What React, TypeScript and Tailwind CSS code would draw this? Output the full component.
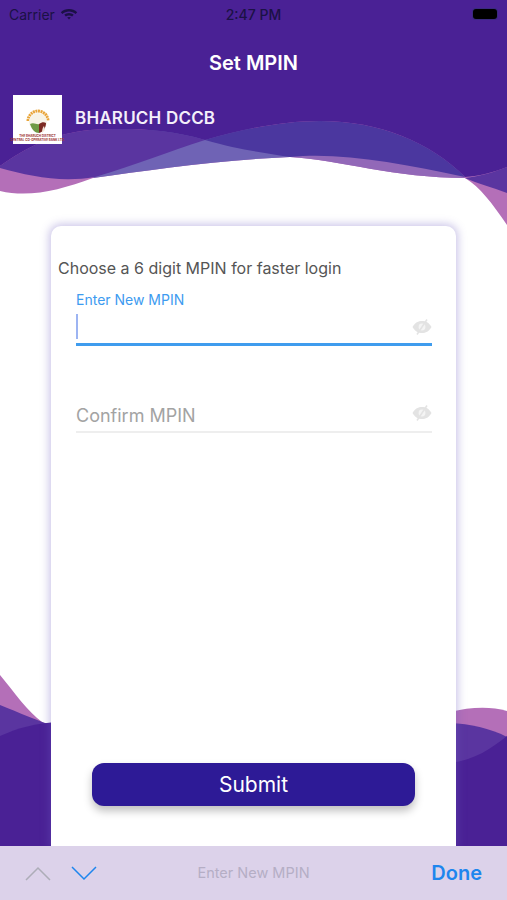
import React from 'react'

const FONT = "font-['Inter','Liberation_Sans',sans-serif]"

// header and footer swooshes behind the card
const Waves = () => (
  <svg className="absolute inset-0 h-[900px] w-[507px]" viewBox="0 0 507 900" fill="none">
    {/* top */}
    <path d="M0 0H507V225C492 203 480 187 465 178C395 178 340 160 290 157C220 160 150 170 93 178C60 190 30 198 0 191Z" fill="#b46fb8" />
    <path d="M93 178C150 170 220 160 290 157L240 120L150 130Z" fill="#6f63b5" />
    <path d="M290 157C340 160 395 178 465 178L440 140L300 130Z" fill="#9268b8" />
    <path d="M0 168C30 176 60 183 95 177C135 165 170 151 205 140C165 128 125 128 90 130C55 133 25 148 0 166Z" fill="#5a35a0" />
    <path d="M205 140C240 150 265 153 290 157C340 152 400 163 465 177C430 142 380 121 320 121C280 121 240 130 205 140Z" fill="#4b379f" />
    <path d="M465 178C480 176 495 172 507 167V193C492 187 478 184 465 178Z" fill="#5a35a0" />
    <path d="M0 0H507V167C495 172 480 176 465 177C430 142 380 121 320 121C280 121 240 130 205 140C165 128 125 128 90 130C55 133 25 148 0 166Z" fill="#4a2195" />
    {/* bottom left */}
    <path d="M0 675C14 692 28 712 42 722L60 730L0 740Z" fill="#b46fb8" />
    <path d="M0 705C20 713 35 720 60 728V760H0Z" fill="#5a35a0" />
    <path d="M0 736C18 728 35 723 60 722V900H0Z" fill="#4a2195" />
    {/* bottom right */}
    <path d="M450 712C470 707 490 706 507 711V745H450Z" fill="#b46fb8" />
    <path d="M450 723C470 724 490 728 507 737V770H450Z" fill="#5a35a0" />
    <path d="M450 763C475 760 492 748 507 736V900H450Z" fill="#4a2195" />
  </svg>
)

const BankLogo = () => (
  <div className="flex h-[49px] w-[49px] flex-col items-center bg-white pt-[14px]">
    <svg width="26" height="24" viewBox="0 0 26 24">
      <path d="M3 12A10 10 0 0 1 23 12" stroke="#e8a53a" strokeWidth="3" fill="none" strokeDasharray="2 0.6" />
      <circle cx="13" cy="13" r="9" fill="#f7f3e6" />
      <path d="M5 15C9 13 12 16 14 15V24C10 24 7 21 5 15Z" fill="#6f9a45" />
      <path d="M14 15C17 13 19 13 21 14C21 19 18 23 14 24Z" fill="#7c2a22" />
      <path d="M17 24C17 20 18 18 19 17L20 21Z" fill="#f3e6d8" />
    </svg>
    <div className="mt-[1px] text-center text-[3px] font-bold leading-[4px] whitespace-nowrap text-[#9b3030]">
      THE BHARUCH DISTRICT
      <br />
      CENTRAL CO-OPERATIVE BANK LTD.
    </div>
  </div>
)

const EyeOff = () => (
  <svg width="20" height="16" viewBox="0 0 20 16">
    <path d="M0.5 8C3 3.5 6.500 2 10 2C13.500 2 17 3.500 19.500 8C17 12.500 13.500 14 10 14C6.500 14 3 12.500 0.500 8Z" fill="#e3e3e3" />
    <circle cx="10" cy="8" r="3.400" fill="#f4f4f4" />
    <path d="M15 0.500L5 15.500" stroke="#e3e3e3" strokeWidth="1.500" />
  </svg>
)

const MpinField = ({ active, label }: { active?: boolean; label: string }) => (
  <div className="ml-[25px] mr-[24px]">
    {active ? (
      <>
        <div className="text-[14px] leading-[18px] text-[#3d9bf0]">{label}</div>
        <div className="flex h-[32px] items-center justify-between pt-[3px]">
          <span className="h-[25px] w-[2px] bg-[#9db4f2]" />
          <EyeOff />
        </div>
        <div className="mt-[2px] h-[3px] bg-[#3f9cee]" />
      </>
    ) : (
      <>
        <div className="flex h-[28px] items-center justify-between">
          <span className="text-[18px] text-[#a3a3a3]">{label}</span>
          <span className="-mt-[4px]">
            <EyeOff />
          </span>
        </div>
        <div className="mt-[2px] h-[2px] bg-[#eeeeee]" />
      </>
    )}
  </div>
)

export default function App() {
  return (
    <div className={`relative flex h-[900px] w-[507px] flex-col overflow-hidden bg-white ${FONT}`}>
      <Waves />

      {/* status bar */}
      <div className="relative flex h-[28px] items-center justify-between pl-[9px] pr-[10px] text-[14px] text-[#1b1145]">
        <div className="flex items-center gap-[5px]">
          <span>Carrier</span>
          <svg width="18" height="14" viewBox="0 0 18 14" fill="#1b1145">
            <path d="M9 2C5.800 2 3 3.200 0.800 5.200L2.400 7C4.200 5.400 6.500 4.400 9 4.400C11.500 4.400 13.800 5.400 15.600 7L17.200 5.200C15 3.200 12.200 2 9 2Z" />
            <path d="M9 6C7.200 6 5.600 6.700 4.300 7.800L5.900 9.500C6.800 8.800 7.900 8.400 9 8.400C10.100 8.400 11.200 8.800 12.100 9.500L13.700 7.800C12.400 6.700 10.800 6 9 6Z" />
            <path d="M9 10C8.300 10 7.700 10.200 7.200 10.600L9 12.600L10.800 10.600C10.300 10.200 9.700 10 9 10Z" />
          </svg>
        </div>
        <span className="absolute left-1/2 -translate-x-1/2 font-medium">2:47 PM</span>
        <div className="h-[10px] w-[24px] rounded-[3px] bg-black ring-1 ring-[#3a2a80]" />
      </div>

      {/* title */}
      <div className="relative mt-[21px] text-center text-[20px] font-semibold leading-[28px] text-white">
        Set MPIN
      </div>

      {/* bank */}
      <div className="relative ml-[13px] mt-[18px] flex items-center gap-[13px]">
        <BankLogo />
        <span className="-mt-[1px] text-[17px] font-semibold tracking-[0.2px] text-[#f4effa]">BHARUCH DCCB</span>
      </div>

      {/* card */}
      <div className="relative mx-[51px] mt-[82px] flex flex-1 flex-col rounded-t-[10px] bg-white pt-[31px] shadow-[0_0_8px_2px_rgba(105,90,190,0.35)]">
        <p className="ml-[7px] text-[16px] leading-[22px] text-[#555555]">Choose a 6 digit MPIN for faster login</p>
        <div className="mt-[12px]">
          <MpinField active label="Enter New MPIN" />
        </div>
        <div className="mt-[55px]">
          <MpinField label="Confirm MPIN" />
        </div>
        <button className="mx-[41px] mb-[40px] mt-auto flex h-[43px] items-center justify-center rounded-[12px] bg-[#2d1a96] text-[21px] text-white shadow-[0_5px_9px_rgba(0,0,0,0.25)]">
          Submit
        </button>
      </div>

      {/* keyboard toolbar */}
      <div className="relative flex h-[54px] items-center justify-between bg-[#dcd2ea] pl-[25px] pr-[25px]">
        <div className="flex items-center gap-[20px]">
          <svg width="26" height="15" viewBox="0 0 26 15" fill="none" stroke="#adadb8" strokeWidth="1.500">
            <path d="M1 14L13 2L25 14" />
          </svg>
          <svg width="26" height="15" viewBox="0 0 26 15" fill="none" stroke="#1e86ee" strokeWidth="1.500">
            <path d="M1 1L13 13L25 1" />
          </svg>
        </div>
        <span className="absolute left-1/2 -translate-x-1/2 text-[14.500px] text-[#b5aec5]">Enter New MPIN</span>
        <span className="text-[20px] font-semibold text-[#1e86ee]">Done</span>
      </div>
    </div>
  )
}
